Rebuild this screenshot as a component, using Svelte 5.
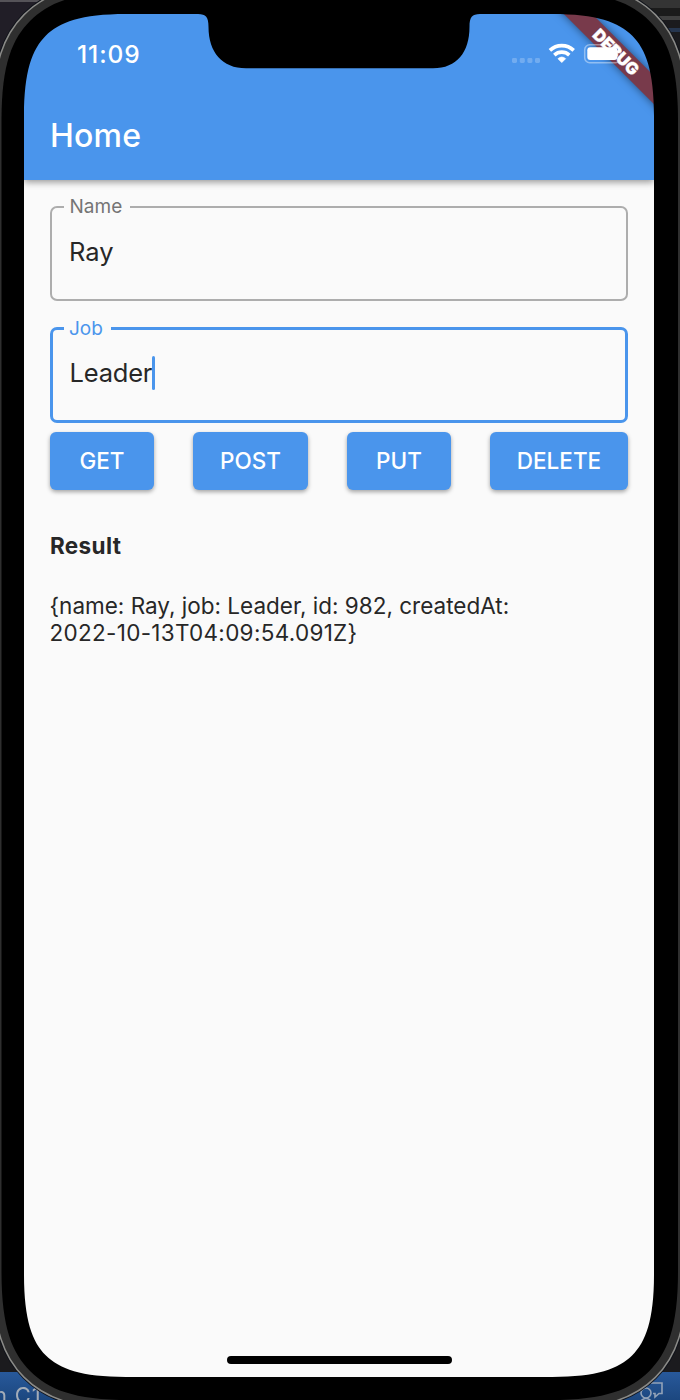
<script>
  let name = $state('Ray');
  let job = $state('Leader');
  const actions = [
    { label: 'GET', width: 104 },
    { label: 'POST', width: 115 },
    { label: 'PUT', width: 104 },
    { label: 'DELETE', width: 138 }
  ];
  const result = ['{name: Ray, job: Leader, id: 982, createdAt:', '2022-10-13T04:09:54.091Z}'];

  // Closed outline with continuous-curvature corners: s is the corner's reach, d its diagonal inset
  function outline(l, t, r, b, s, d) {
    const c = s * 0.56;
    const near = d * 0.38;
    const far = 2 * d - near;
    return `M${l} ${t + s}C${l} ${t + c} ${l + near} ${t + far} ${l + d} ${t + d}S${l + c} ${t} ${l + s} ${t}` +
      `H${r - s}C${r - c} ${t} ${r - far} ${t + near} ${r - d} ${t + d}S${r} ${t + c} ${r} ${t + s}` +
      `V${b - s}C${r} ${b - c} ${r - near} ${b - far} ${r - d} ${b - d}S${r - c} ${b} ${r - s} ${b}` +
      `H${l + s}C${l + c} ${b} ${l + far} ${b - near} ${l + d} ${b - d}S${l} ${b - c} ${l} ${b - s}Z`;
  }
  const glass = outline(24, 14, 654, 1377, 102, 21.7);
  const body = outline(1.5, -8, 678, 1400, 128, 28.8);
</script>

<main>
  <div class="screen">
    <header>
      <div class="status">
        <time>11:09</time>
        <svg class="signals" width="68" height="24" viewBox="0 0 68 24">
          <g fill="#fff" opacity=".22">
            <rect x="2" y="16" width="5" height="5" rx="1.4" /><rect x="9.8" y="16" width="5" height="5" rx="1.4" />
            <rect x="17.4" y="16" width="5" height="5" rx="1.4" /><rect x="25" y="16" width="5" height="5" rx="1.4" />
          </g>
          <g fill="none" stroke="#fff" stroke-width="3.6">
            <path d="M39.9 8.4A17.3 17.3 0 0 1 63.700 8.4" />
            <path d="M44.300 13.100A11 11 0 0 1 59.300 13.100" />
          </g>
          <path d="M51.8 20.500 48 16.700Q51.8 13.500 55.600 16.700Z" fill="#fff" stroke="#fff" stroke-width=".8" />
        </svg>
      </div>
      <h1>Home</h1>
    </header>

    <section>
      <fieldset class="field">
        <legend>Name</legend>
        <span class="value">{name}</span>
      </fieldset>
      <fieldset class="field focused">
        <legend>Job</legend>
        <span class="value">{job}</span><i class="caret"></i>
      </fieldset>
      <div class="actions">
        {#each actions as action}
          <button style:width="{action.width}px">{action.label}</button>
        {/each}
      </div>
      <h2>Result</h2>
      <p>{#each result as line}<span>{line}</span>{/each}</p>
    </section>
    <div class="home-bar"></div>
  </div>

  <div class="banner"><span>DEBUG</span></div>
  <svg class="battery" width="42" height="22" viewBox="0 0 42 22">
    <rect x="2.7" y="2.7" width="36" height="18" rx="5" fill="none" stroke="#fff" stroke-width="1.5" opacity=".4" />
    <rect x="5.3" y="5.3" width="30" height="12.8" rx="3" fill="#fff" />
  </svg>

  <svg class="frame" width="680" height="1400" viewBox="0 0 680 1400">
    <defs>
      <linearGradient id="bar" x1="0" x2="0" y1="0" y2="1"><stop offset="0" stop-color="#28599b" /><stop offset="1" stop-color="#1c477f" /></linearGradient>
      <mask id="around"><rect width="680" height="1400" fill="#fff" /><path d={glass} fill="#000" /></mask>
    </defs>
    <g mask="url(#around)">
      <rect width="680" height="1400" fill="#1b1b1e" />
      <rect width="60" height="2" fill="#555358" />
      <rect y="2" width="60" height="60" fill="#211e27" />
      <rect x="620" width="60" height="8" fill="#343434" />
      <rect x="640" y="8" width="40" height="8" fill="#1b1b1b" />
      <rect x="640" y="16" width="40" height="4" fill="#404040" />
      <rect x="640" y="28" width="40" height="4" fill="#26364f" />
      <rect y="1372" width="680" height="28" fill="url(#bar)" />
      <text x="-6" y="1402.500" font-size="22" letter-spacing=".8" fill="#a3acb8">n C1</text>
      <g fill="none" stroke="#93a3b8" stroke-width="1.6">
        <circle cx="646" cy="1393" r="5" />
        <path d="M638 1404Q646 1393 654 1404M651 1383H662V1393.500H659L655 1397V1393.500H653" />
      </g>
      <path d={body} stroke="#10131a" stroke-width="21" />
      <path d={body} stroke="#8b8b88" stroke-width="19" />
      <path d={body} stroke="#2f2f2f" stroke-width="16" />
      <path d={body} fill="#000" />
    </g>
    <path d="M198 13V14C206 14 208.500 17 208.500 27C208.500 52 222 68.300 246 68.300H433C457 68.300 469.500 52 469.500 27C469.500 17 472 14 480 14V13Z" />
  </svg>
</main>

<style>
  :global(body) { margin: 0; background: #000; }
  main { position: relative; display: flex; width: 680px; height: 1400px; overflow: hidden; background: #000; font-family: Inter, sans-serif; color: #272727; }
  .screen { box-sizing: border-box; width: 630px; height: 1363px; margin: 14px 24px 0; background: #fafafa; display: flex; flex-direction: column; }
  header { height: 166px; flex: none; background: #4a95ec; color: #fff; box-shadow: 0 2px 7px rgba(0,0,0,.42); }
  .status { height: 80px; display: flex; justify-content: space-between; align-items: center; padding: 0 76px 0 53px; box-sizing: border-box; }
  time { font-size: 24.500px; font-weight: 500; letter-spacing: .9px; }
  h1 { margin: 0; padding: 22px 26px; font-size: 32px; line-height: 40px; font-weight: 500; letter-spacing: .2px; }
  section { padding: 17px 26px; display: flex; flex-direction: column; }
  .field { box-sizing: border-box; min-width: 0; height: 104px; margin: 0 0 17.500px; padding: 0 0 0 12px; border: 2px solid #adadad; border-radius: 7px; display: flex; }
  .field legend { margin-left: 0; padding: 0 8px 0 5.500px; font-size: 19px; line-height: 19px; height: 19px; color: #757575; }
  .field .value { padding: 20px 0 0 5px; font-size: 25.500px; line-height: 32px; }
  .focused { border: 3px solid #4a95ec; margin-bottom: 9.400px; padding-left: 11px; }
  .focused legend { color: #4a95ec; padding-left: 5px; }
  .focused .value { padding: 19px 0 0 5.500px; letter-spacing: -.2px; }
  .caret { width: 3px; height: 34px; border-radius: 2px; background: #4a95ec; margin: 18px 0 0 -.5px; }
  .actions { display: flex; justify-content: space-between; }
  button { height: 58px; padding: 0 0 1px; border: 0; border-radius: 6px; background: #4a95ec; color: #fff; font: 500 22.500px Inter, sans-serif; box-shadow: 0 2px 4px rgba(0,0,0,.35); }
  h2 { margin: 42px 0 0; font-size: 22.500px; line-height: 28px; font-weight: 700; letter-spacing: .35px; }
  p { margin: 32px 0 0 -.5px; font-size: 22.500px; line-height: 27.500px; }
  p span { display: block; white-space: pre; }
  p span + span { letter-spacing: .3px; }
  .home-bar { width: 225px; height: 8px; border-radius: 4px; background: #000; margin: auto auto 13px; }
  .banner { position: absolute; left: 516px; top: 42px; width: 200px; height: 20px; background: #783a4b; transform: rotate(45deg); box-shadow: 0 0 9px rgba(0,0,0,.5); display: flex; align-items: center; justify-content: center; color: #fff; font-size: 16.500px; font-weight: 900; }
  .banner { z-index: 1; clip-path: inset(-12px 0); }
  .banner span { -webkit-text-stroke: .3px #fff; }
  .battery { position: absolute; left: 582px; top: 42px; z-index: 1; }
  .frame { position: absolute; left: 0; top: 0; z-index: 2; }
</style>
